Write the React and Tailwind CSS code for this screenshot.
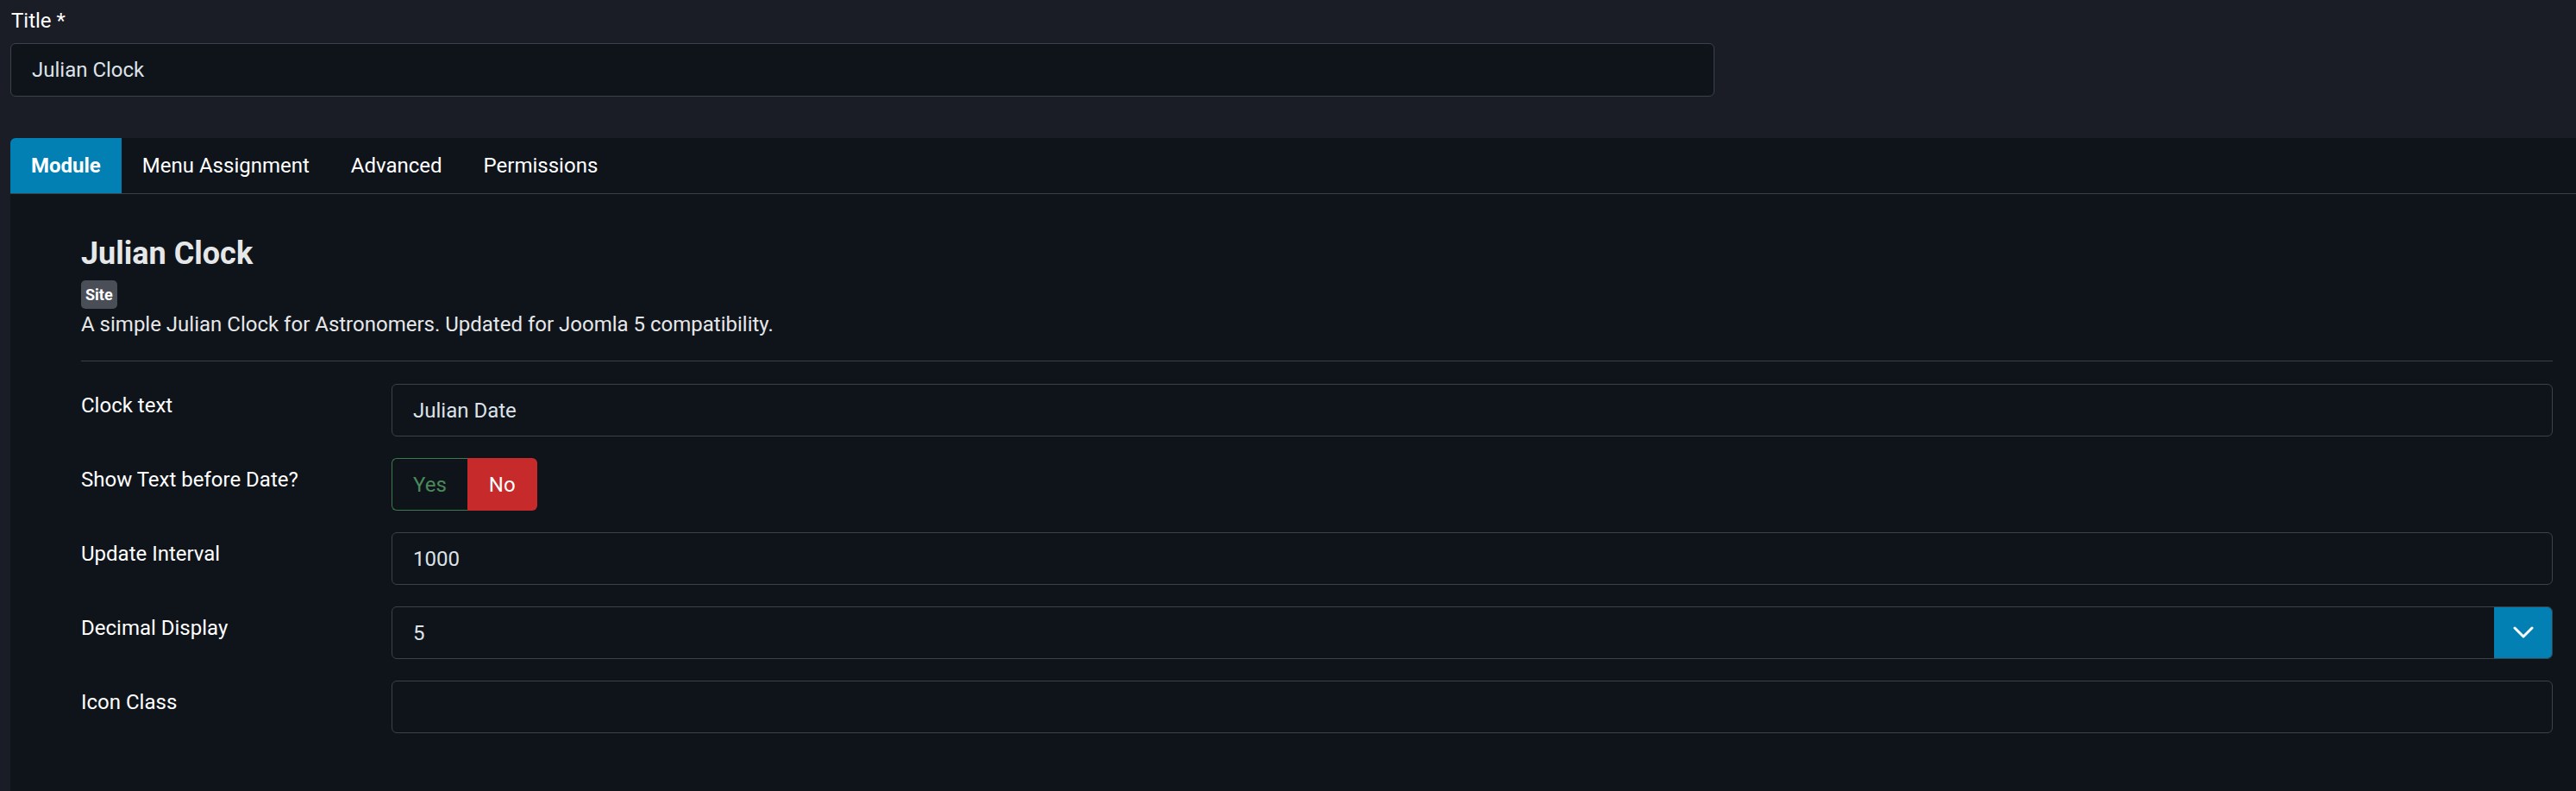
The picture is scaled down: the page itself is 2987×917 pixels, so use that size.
const fields = [
  { label: "Clock text", kind: "text", value: "Julian Date" },
  { label: "Show Text before Date?", kind: "toggle" },
  { label: "Update Interval", kind: "text", value: "1000" },
  { label: "Decimal Display", kind: "select", value: "5" },
  { label: "Icon Class", kind: "text", value: "" },
];

const tabs = ["Module", "Menu Assignment", "Advanced", "Permissions"];

function TextBox({ value }) {
  return (
    <div className="flex h-[61px] flex-1 items-center rounded-[6px] border border-[#3d414a] bg-[#0f141b] px-[24px] text-[24px] leading-[36px] text-[#dde2e8]">
      {value}
    </div>
  );
}

function SelectBox({ value }) {
  return (
    <div className="flex h-[61px] flex-1 overflow-hidden rounded-[6px] border border-[#3d414a] bg-[#0f141b]">
      <div className="flex flex-1 items-center px-[24px] text-[24px] leading-[36px] text-[#dde2e8]">
        {value}
      </div>
      <div className="-my-px -mr-px flex w-[68px] items-center justify-center rounded-r-[6px] bg-[#0280b3]">
        <svg width="24" height="15" viewBox="0 0 24 15" fill="none">
          <path d="M2 2 L12 12 L22 2" stroke="#ffffff" strokeWidth="3" strokeLinecap="round" strokeLinejoin="round" />
        </svg>
      </div>
    </div>
  );
}

function YesNo() {
  return (
    <div className="flex h-[61px] text-[24px] leading-[36px]">
      <div className="flex items-center rounded-l-[6px] border border-r-0 border-[#3b7a4b] px-[24px] text-[#4a8a5a]">
        Yes
      </div>
      <div className="flex items-center rounded-r-[6px] bg-[#c62a2a] px-[25px] text-white">
        No
      </div>
    </div>
  );
}

export default function App() {
  return (
    <div className="min-h-[917px] bg-[#1a1d25] pt-[6px] text-white" style={{ fontFamily: "Roboto, 'Noto Sans', sans-serif" }}>
      {/* title field */}
      <div className="pl-[12px]">
        <div className="pl-px text-[24px] leading-[36px] text-white">Title *</div>
        <div className="mt-[8px] flex h-[62px] w-[1976px] items-center rounded-[6px] border border-[#3d414a] bg-[#0f141b] px-[24px] text-[24px] leading-[36px] text-[#dde2e8]">
          Julian Clock
        </div>
      </div>

      {/* tabbed panel */}
      <div className="ml-[12px] mt-[48px] min-h-[757px] rounded-tl-[6px] bg-[#0f141b]">
        <div className="flex h-[65px] border-b border-[#3a3e48]">
          {tabs.map((t, i) => (
            <div
              key={t}
              className={
                i === 0
                  ? "flex items-center rounded-tl-[6px] bg-[#0280b3] px-[24px] text-[24px] font-bold text-white"
                  : "flex items-center px-[24px] text-[24px] text-white"
              }
            >
              {t}
            </div>
          ))}
        </div>

        <div className="pl-[82px] pr-[27px] pt-[48px]">
          <h2 className="text-[36px] font-bold leading-[43px] text-[#e6e7e9]">Julian Clock</h2>
          <span className="mt-[9px] inline-flex h-[33px] items-center rounded-[5px] bg-[#4a4f57] px-[5px] text-[18px] font-bold text-white">
            Site
          </span>
          <p className="text-[24px] leading-[36px] text-[#e6e7e9]">
            A simple Julian Clock for Astronomers. Updated for Joomla 5 compatibility.
          </p>
          <div className="mt-[24px] h-px bg-[#3a3e48]" />

          <div className="mt-[26px] flex flex-col gap-[25px]">
            {fields.map((f) => (
              <div key={f.label} className="flex">
                <div className="w-[360px] shrink-0 pt-[7px] text-[24px] leading-[36px] text-white">{f.label}</div>
                {f.kind === "text" && <TextBox value={f.value} />}
                {f.kind === "select" && <SelectBox value={f.value} />}
                {f.kind === "toggle" && <YesNo />}
              </div>
            ))}
          </div>
        </div>
      </div>
    </div>
  );
}
